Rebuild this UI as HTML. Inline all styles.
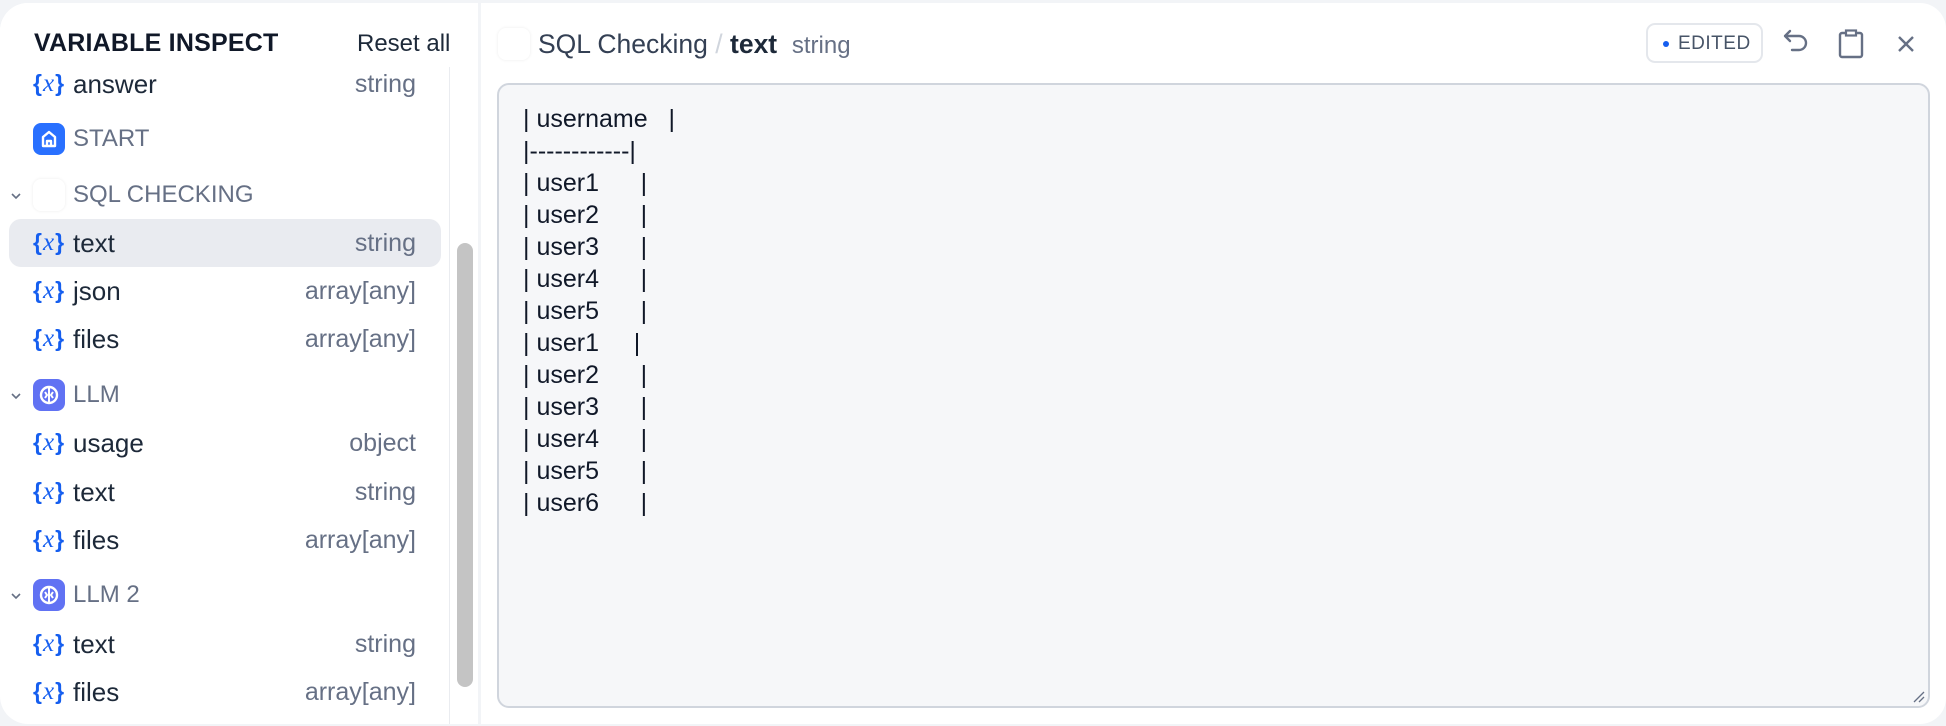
<!DOCTYPE html>
<html><head><meta charset="utf-8"><style>
*{box-sizing:border-box;margin:0;padding:0}
body{width:1946px;height:726px;background:#f2f4f7;font-family:"Liberation Sans",sans-serif;position:relative;overflow:hidden}
.left{position:absolute;left:0;top:3px;width:478px;height:721px;background:#fff;border-radius:28px 0 0 28px;overflow:hidden}
.hdr{position:absolute;left:0;top:0;width:478px;height:64px;background:#fff;z-index:2}
.hdr .t{position:absolute;left:34px;top:26px;font-size:25px;font-weight:bold;color:#101828;letter-spacing:0.2px}
.hdr .r{position:absolute;left:357px;top:27px;font-size:24px;color:#1d2939}
.sb{position:absolute;left:449px;top:64px;width:1px;height:660px;background:#eaecf0}
.thumb{position:absolute;left:457px;top:240px;width:16px;height:444px;border-radius:8px;background:#c4c4c4}
.row{position:absolute;left:0;width:440px;height:48px}
.row .x{position:absolute;left:33px;top:10px;font-size:23px;color:#155eef;font-family:"Liberation Sans",sans-serif;font-weight:bold}
.row .x i{font-family:"Liberation Serif",serif;font-size:25px;padding:0 1px;font-weight:normal}
.row .n{position:absolute;left:73px;top:9px;font-size:26px;color:#1d2939}
.row .ty{position:absolute;right:24px;top:10px;font-size:25px;color:#667085}
.sel{position:absolute;left:9px;top:216px;width:432px;height:48px;border-radius:12px;background:#e9ebf0}
.node{position:absolute;left:0;width:440px;height:48px}
.node .ic{position:absolute;left:33px;top:8px;width:32px;height:32px;border-radius:8px}
.node .n{position:absolute;left:73px;top:10px;font-size:24px;color:#667085}
.node .ch{position:absolute;left:10px;top:19px;width:12px;height:12px}
.right{position:absolute;left:481px;top:3px;width:1465px;height:721px;background:#fff;border-radius:0 26px 26px 0}
.ta{position:absolute;left:16px;top:80px;width:1433px;height:625px;background:#f6f7f9;border:2px solid #d0d5dd;border-radius:12px}
.ta pre{position:absolute;left:24px;top:18px;font-family:"Liberation Sans",sans-serif;font-size:25px;line-height:32px;color:#101828}
.badge{position:absolute;left:1165px;top:20px;width:117px;height:40px;border:2px solid #e4e7ec;border-radius:9px;font-size:19px;color:#475467;letter-spacing:0.5px}
</style></head><body>
<div class="left">
 <div class="hdr"><div class="t">VARIABLE INSPECT</div><div class="r">Reset all</div></div>
 <div class="sel"></div>
 <div class="row" style="top:57px"><span class="x">{<i>x</i>}</span><span class="n">answer</span><span class="ty">string</span></div>
 <div class="node" style="top:112px"><div class="ic" style="background:#2970ff"><svg width="32" height="32" viewBox="0 0 32 32"><path d="M10 23V14l6-5 6 5v9zM14 23v-5h4v5" fill="none" stroke="#fff" stroke-width="2.4" stroke-linejoin="round"/></svg></div><span class="n">START</span></div>
 <div class="node" style="top:168px"><svg class="ch" viewBox="0 0 12 12"><path d="M2 4l4 4 4-4" fill="none" stroke="#667085" stroke-width="1.6"/></svg><div class="ic" style="background:#fff;box-shadow:0 0 3px rgba(0,0,0,0.08)"></div><span class="n">SQL CHECKING</span></div>
 <div class="row" style="top:216px"><span class="x">{<i>x</i>}</span><span class="n">text</span><span class="ty">string</span></div>
 <div class="row" style="top:264px"><span class="x">{<i>x</i>}</span><span class="n">json</span><span class="ty">array[any]</span></div>
 <div class="row" style="top:312px"><span class="x">{<i>x</i>}</span><span class="n">files</span><span class="ty">array[any]</span></div>
 <div class="node" style="top:368px"><svg class="ch" viewBox="0 0 12 12"><path d="M2 4l4 4 4-4" fill="none" stroke="#667085" stroke-width="1.6"/></svg><div class="ic" style="background:#6172f3"><svg width="32" height="32" viewBox="0 0 32 32"><circle cx="16" cy="16" r="8" fill="none" stroke="#fff" stroke-width="2.4"/><path d="M16 8v16M12 13l2 3-2 3M20 13l-2 3 2 3" fill="none" stroke="#fff" stroke-width="2"/></svg></div><span class="n">LLM</span></div>
 <div class="row" style="top:416px"><span class="x">{<i>x</i>}</span><span class="n">usage</span><span class="ty">object</span></div>
 <div class="row" style="top:465px"><span class="x">{<i>x</i>}</span><span class="n">text</span><span class="ty">string</span></div>
 <div class="row" style="top:513px"><span class="x">{<i>x</i>}</span><span class="n">files</span><span class="ty">array[any]</span></div>
 <div class="node" style="top:568px"><svg class="ch" viewBox="0 0 12 12"><path d="M2 4l4 4 4-4" fill="none" stroke="#667085" stroke-width="1.6"/></svg><div class="ic" style="background:#6172f3"><svg width="32" height="32" viewBox="0 0 32 32"><circle cx="16" cy="16" r="8" fill="none" stroke="#fff" stroke-width="2.4"/><path d="M16 8v16M12 13l2 3-2 3M20 13l-2 3 2 3" fill="none" stroke="#fff" stroke-width="2"/></svg></div><span class="n">LLM 2</span></div>
 <div class="row" style="top:617px"><span class="x">{<i>x</i>}</span><span class="n">text</span><span class="ty">string</span></div>
 <div class="row" style="top:665px"><span class="x">{<i>x</i>}</span><span class="n">files</span><span class="ty">array[any]</span></div>
 <div class="sb"></div><div class="thumb"></div>
</div>
<div class="right">
 <div style="position:absolute;left:17px;top:25px;width:32px;height:32px;border-radius:8px;background:#fff;box-shadow:0 0 3px rgba(0,0,0,0.08)"></div>
 <div style="position:absolute;left:57px;top:26px;font-size:26.5px;color:#344054;white-space:nowrap">SQL Checking <span style="color:#d0d5dd">/</span> <b style="color:#1d2939">text</b> &nbsp;<span style="color:#667085;font-size:24px">string</span></div>
 <div class="badge"><span style="position:absolute;left:15px;top:16px;width:6px;height:6px;border-radius:3px;background:#155eef"></span><span style="position:absolute;left:30px;top:8px">EDITED</span></div>
 <svg style="position:absolute;left:1301px;top:24px" width="30" height="34" viewBox="0 0 30 34"><path d="M8 4L3 9l5 5M3 9h14a7 7 0 0 1 0 14H10" fill="none" stroke="#667085" stroke-width="2.4" stroke-linecap="round" stroke-linejoin="round"/></svg>
 <svg style="position:absolute;left:1357px;top:26px" width="26" height="30" viewBox="0 0 26 30"><rect x="2" y="4" width="22" height="24" rx="2" fill="none" stroke="#667085" stroke-width="2.4"/><rect x="8" y="1.5" width="10" height="5" fill="#fff" stroke="#667085" stroke-width="2.2"/></svg>
 <svg style="position:absolute;left:1416px;top:32px" width="18" height="18" viewBox="0 0 18 18"><path d="M2 2l14 14M16 2L2 16" stroke="#667085" stroke-width="2.4"/></svg>
 <div class="ta"><pre>| username   |
|------------|
| user1      |
| user2      |
| user3      |
| user4      |
| user5      |
| user1     |
| user2      |
| user3      |
| user4      |
| user5      |
| user6      |</pre>
 <svg style="position:absolute;right:2px;bottom:2px" width="14" height="14" viewBox="0 0 14 14"><path d="M2 12L12 2M7 12l5-5" stroke="#667085" stroke-width="1.3"/></svg></div>
</div>
</body></html>
